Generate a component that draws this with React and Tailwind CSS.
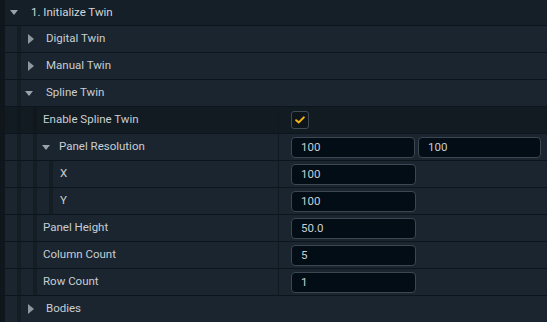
import React from 'react'

const font = { fontFamily: 'Roboto, "Liberation Sans", sans-serif' }

function Bar({ dim }) {
    return <div className={`w-[4px] self-stretch ${dim ? 'bg-[#10181e]' : 'bg-[#141d24]'}`} />
}

function TriDown() {
    return (
        <svg width="8" height="5" viewBox="0 0 8 5" className="shrink-0">
            <path d="M0 0 H8 L4 5 Z" fill="#9aa3a9" />
        </svg>
    )
}

function TriRight() {
    return (
        <svg width="6" height="10" viewBox="0 0 6 10" className="shrink-0">
            <path d="M0 0 L6 5 L0 10 Z" fill="#8e979d" />
        </svg>
    )
}

function Input({ value, w = 'w-[125px]' }) {
    return (
        <div className={`${w} h-[21px] mt-[1px] rounded-[4px] border border-[#3b4751] bg-[#020d15] pl-[9px] flex items-center text-[11.5px] text-[#c9cfd3]`}>
            {value}
        </div>
    )
}

function Group({ label, open, level }) {
    return (
        <div className={`flex border-b border-[#0c151b] ${level === 0 ? 'h-[26px] bg-[#151f27]' : 'h-[27px] bg-[#1a2530]'}`}>
            <div className="w-[5px] bg-[#0f171d]" />
            {level === 0 ? (
                <div className="flex items-center">
                    <div className="w-[5px]" />
                    <TriDown />
                    <div className="w-[13px]" />
                    <span className="text-[11.5px] text-[#d2d7da]">{label}</span>
                </div>
            ) : (
                <div className="flex items-center">
                    <div className="w-[12px]" />
                    <Bar />
                    {open ? (
                        <>
                            <div className="w-[4px]" />
                            <TriDown />
                            <div className="w-[13px]" />
                        </>
                    ) : (
                        <>
                            <div className="w-[7px]" />
                            <TriRight />
                            <div className="w-[12px]" />
                        </>
                    )}
                    <span className="text-[11.5px] text-[#c8ced2]">{label}</span>
                </div>
            )}
        </div>
    )
}

function Prop({ label, depth, expander, highlight, children }) {
    return (
        <div className={`flex h-[27px] border-b border-[#0c151b] ${highlight ? 'bg-[#121b22]' : 'bg-[#1a2530]'}`}>
            <div className="w-[5px] bg-[#0f171d]" />
            <div className="w-[273px] flex items-center">
                <div className="w-[12px]" />
                <Bar dim={highlight} />
                <div className="w-[12px]" />
                <Bar dim={highlight} />
                {depth === 3 ? (
                    <>
                        <div className="w-[12px]" />
                        <Bar />
                        <div className="w-[7px]" />
                    </>
                ) : expander ? (
                    <>
                        <div className="w-[5px]" />
                        <TriDown />
                        <div className="w-[9px]" />
                    </>
                ) : (
                    <div className="w-[6px]" />
                )}
                <span className="text-[11.5px] text-[#c8ced2]">{label}</span>
            </div>
            <div className="w-[1px] bg-[#10191f]" />
            <div className="flex-1 flex items-center pl-[12px] gap-[3px]">{children}</div>
        </div>
    )
}

export default function App() {
    return (
        <div className="w-[547px] h-[322px] overflow-hidden bg-[#1a2530] select-none" style={font}>
            <Group label="1. Initialize Twin" level={0} />
            <Group label="Digital Twin" level={1} />
            <Group label="Manual Twin" level={1} />
            <Group label="Spline Twin" level={1} open />
            <Prop label="Enable Spline Twin" depth={2} highlight>
                <div className="w-[18px] h-[18px] rounded-[3px] border border-[#3e4a54] bg-[#0d151b] flex items-center justify-center">
                    <svg width="10" height="8" viewBox="0 0 10 8">
                        <path d="M1.2 4.2 L3.8 6.4 L8.8 1.4" fill="none" stroke="#f4b50c" strokeWidth="2" strokeLinecap="round" strokeLinejoin="round" />
                    </svg>
                </div>
            </Prop>
            <Prop label="Panel Resolution" depth={2} expander>
                <Input value="100" w="w-[124px]" />
                <Input value="100" w="w-[123px]" />
            </Prop>
            <Prop label="X" depth={3}>
                <Input value="100" />
            </Prop>
            <Prop label="Y" depth={3}>
                <Input value="100" />
            </Prop>
            <Prop label="Panel Height" depth={2}>
                <Input value="50.0" />
            </Prop>
            <Prop label="Column Count" depth={2}>
                <Input value="5" />
            </Prop>
            <Prop label="Row Count" depth={2}>
                <Input value="1" />
            </Prop>
            <Group label="Bodies" level={1} />
        </div>
    )
}
